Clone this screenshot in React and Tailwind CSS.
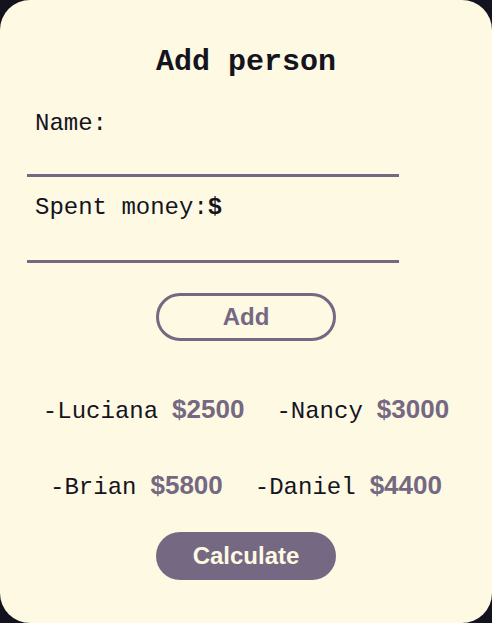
import { useState } from "react";

const people = [
  { name: "Luciana", spent: 2500 },
  { name: "Nancy", spent: 3000 },
  { name: "Brian", spent: 5800 },
  { name: "Daniel", spent: 4400 },
];

export default function App() {
  const [name, setName] = useState("");
  const [money, setMoney] = useState("");

  const mono = { fontFamily: '"Liberation Mono", "DejaVu Sans Mono", monospace' };

  return (
    <div className="w-[492px] h-[623px] bg-[#12131f]">
      <div
        className="h-full rounded-[30px] bg-[#fef9e3] text-[#14141f] flex flex-col items-center"
        style={mono}
      >
        <h1 className="mt-[44px] text-[30px] leading-[36px] font-bold">Add person</h1>

        {/* Form */}
        <div className="self-start ml-[27px] w-[372px] mt-[30px]">
          <label className="block pl-[8px] text-[24px] leading-[28px]">Name:</label>
          <input
            type="text"
            value={name}
            onChange={(e) => setName(e.target.value)}
            className="block w-full h-[39px] bg-transparent border-b-[3px] border-[#756882] outline-none"
          />
          <label className="block mt-[17px] pl-[8px] text-[24px] leading-[28px]">
            Spent money:<b>$</b>
          </label>
          <input
            type="number"
            value={money}
            onChange={(e) => setMoney(e.target.value)}
            className="block w-full h-[41px] bg-transparent border-b-[3px] border-[#756882] outline-none"
          />
        </div>

        <button className="mt-[30px] w-[180px] h-[48px] rounded-full border-[3px] border-[#756882] text-[#756882] text-[24px] font-bold font-['Liberation_Sans',Arial,sans-serif]">
          Add
        </button>

        {/* People list */}
        <div className="mt-[54px] w-[440px] flex flex-wrap justify-center gap-x-[32px] gap-y-[45px]">
          {people.map((p) => (
            <p key={p.name} className="text-[24px] leading-[28px] whitespace-nowrap">
              -{p.name}
              <span className="ml-[14px] text-[26px] leading-[28px] font-bold text-[#756882] font-['Liberation_Sans',Arial,sans-serif]">
                ${p.spent}
              </span>
            </p>
          ))}
        </div>

        <button className="mt-[30px] w-[180px] h-[48px] rounded-full bg-[#756882] text-[#fef9e3] text-[24px] font-bold font-['Liberation_Sans',Arial,sans-serif]">
          Calculate
        </button>
      </div>
    </div>
  );
}
